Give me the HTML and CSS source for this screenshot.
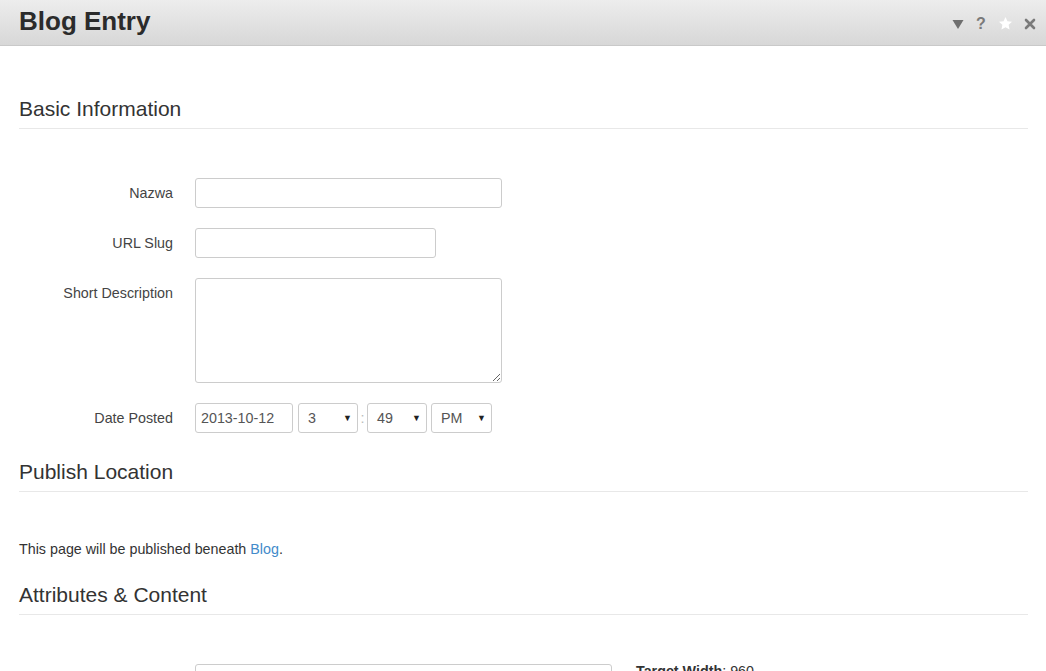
FILE: index.html
```html
<!DOCTYPE html>
<html lang="en">
<head>
    <meta charset="UTF-8">
    <meta name="viewport" content="width=device-width, initial-scale=1.0">
    <title>Blog Entry</title>
    <link rel="stylesheet" href="styles.css">
</head>
<body>
    <div class="dialog-head">
        <h1 class="dialog-title">Blog Entry</h1>
        <div class="dialog-tools">
            <svg class="tool" width="12" height="12" viewBox="0 0 12 12"><path d="M0.5 2 L11.5 2 L6 11 Z" fill="#6f6f6f"/></svg>
            <span class="tool tool-help">?</span>
            <svg class="tool" width="15" height="15" viewBox="0 0 24 24"><path d="M12 1.5 L15.1 8.3 L22.5 9.1 L17 14.1 L18.5 21.5 L12 17.8 L5.5 21.5 L7 14.1 L1.5 9.1 L8.9 8.3 Z" fill="#ffffff"/></svg>
            <svg class="tool" width="12" height="12" viewBox="0 0 12 12"><path d="M2 2 L10 10 M10 2 L2 10" stroke="#7a7a7a" stroke-width="2.6" stroke-linecap="round"/></svg>
        </div>
    </div>

    <div class="page">
        <section class="group first">
            <h2 class="legend">Basic Information</h2>
            <div class="fields">
                <div class="row">
                    <label class="label">Nazwa</label>
                    <input class="control w-wide" type="text">
                </div>
                <div class="row">
                    <label class="label">URL Slug</label>
                    <input class="control w-mid" type="text">
                </div>
                <div class="row">
                    <label class="label">Short Description</label>
                    <textarea class="control w-wide area"></textarea>
                </div>
                <div class="row">
                    <label class="label">Date Posted</label>
                    <div class="date-line">
                        <input class="control date" type="text" value="2013-10-12">
                        <div class="control pick">3<span class="arrow">&#9660;</span></div>
                        <span class="colon">:</span>
                        <div class="control pick">49<span class="arrow">&#9660;</span></div>
                        <div class="control pick ampm">PM<span class="arrow">&#9660;</span></div>
                    </div>
                </div>
            </div>
        </section>

        <section class="group">
            <h2 class="legend">Publish Location</h2>
            <p class="note">This page will be published beneath <a href="#">Blog</a>.</p>
        </section>

        <section class="group after-note">
            <h2 class="legend">Attributes &amp; Content</h2>
            <div class="fields">
                <div class="row">
                    <label class="label"></label>
                    <div class="media-line">
                        <input class="control w-big" type="text">
                        <span class="hint"><b>Target Width</b>: 960</span>
                    </div>
                </div>
            </div>
        </section>
    </div>
</body>
</html>
```

FILE: styles.css
```css
body{
    margin: 0;
    font-family: "Liberation Sans", Arial, sans-serif;
    font-size: 14.3px;
    line-height: 20px;
    color: #333;
    background: #fff;
}

.dialog-head{
    height: 45px;
    border-bottom: 1px solid #c9c9c9;
    background: linear-gradient(#ededed, #d7d7d7);
    display: flex;
    align-items: center;
    justify-content: space-between;
    padding: 0 10px 0 19px;
}
.dialog-title{
    margin: 0 0 3px;
    font-size: 26px;
    line-height: 30px;
    font-weight: bold;
    color: #2b2b2b;
}
.dialog-tools{
    display: flex;
    align-items: center;
    gap: 11px;
    padding-top: 2px;
}
.tool-help{
    font-weight: bold;
    font-size: 16px;
    color: #7a7a7a;
    width: 12px;
    text-align: center;
}

.page{
    padding: 0 18px 0 19px;
}
.group{
    margin-top: 24px;
}
.group.first{
    margin-top: 48px;
}
.group.after-note{
    margin-top: 21px;
}
.legend{
    margin: 0;
    font-size: 21px;
    font-weight: normal;
    line-height: 30px;
    padding-bottom: 4px;
    border-bottom: 1px solid #e8e8e8;
    color: #333;
}
.fields{
    display: grid;
    row-gap: 20px;
    margin-top: 49px;
}
.row{
    display: grid;
    grid-template-columns: 154px 1fr;
    column-gap: 22px;
}
.label{
    text-align: right;
    padding-top: 5px;
    color: #444;
}

.control{
    box-sizing: border-box;
    height: 30px;
    border: 1px solid #ccc;
    border-radius: 3px;
    font-family: inherit;
    font-size: 14.3px;
    color: #555;
    padding: 0 5px;
    background: #fff;
    margin: 0;
}
.w-wide{ width: 307px; }
.w-mid{ width: 241px; }
.w-big{ width: 417px; }
.area{
    height: 105px;
    resize: vertical;
    display: block;
}

.date-line{
    display: flex;
    align-items: center;
}
.date{
    width: 98px;
    margin-right: 5px;
}
.pick{
    width: 60px;
    display: flex;
    align-items: center;
    justify-content: space-between;
    padding: 0 5px 0 9px;
}
.ampm{
    width: 61px;
    margin-left: 4px;
}
.arrow{
    font-size: 9px;
    color: #222;
}
.colon{
    width: 9px;
    text-align: center;
    color: #bbb;
}

.note{
    margin: 47px 0 0;
}
.note a{
    color: #428bca;
    text-decoration: none;
}

.media-line{
    display: flex;
    align-items: flex-start;
    gap: 24px;
}
.hint{
    line-height: 14px;
    color: #333;
}
```
